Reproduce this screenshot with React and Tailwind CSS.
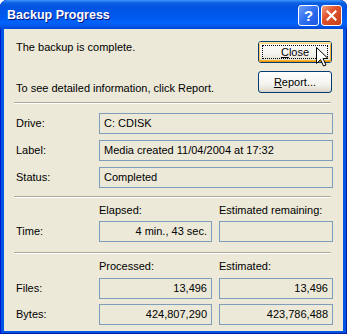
import React from 'react';

const font = { fontFamily: '"Liberation Sans", Arial, sans-serif' };

const Sep = () => (
  <div className="ml-[-2px] mr-[2px] h-[2px] border-t border-[#aca899] border-b border-b-white" />
);

const Field = ({ children, right, className = '' }) => (
  <div
    className={`h-[21px] border border-[#7f9db9] bg-[#ece9d8] flex items-center px-[4px] text-[11px] text-black leading-none ${
      right ? 'justify-end' : ''
    } ${className}`}
  >
    {children}
  </div>
);

const XpButton = ({ children, focused }) => (
  <div className="relative h-[22px] w-[74px] rounded-[3px] border border-[#003c74] bg-[linear-gradient(to_bottom,#ffffff_0%,#f4f3ee_60%,#e6e3d8_85%,#d6d0c5_100%)] flex items-center justify-center text-[11px] text-black">
    {focused && (
      <>
        <div className="absolute inset-0 rounded-[2px] shadow-[inset_0_1px_0_#ffe7a2,inset_0_-1px_0_#e59700,inset_1px_0_0_#fcc95b,inset_-1px_0_0_#f4b23a,inset_0_2px_0_#fcd47c,inset_0_-2px_0_#f8b330]" />
        <div className="absolute inset-[3px] border border-dotted border-black" />
      </>
    )}
    <span className="relative">{children}</span>
  </div>
);

const Cursor = () => (
  <svg
    className="absolute left-[316px] top-[47px]"
    width="14"
    height="21"
    viewBox="0 0 14 21"
  >
    <polygon
      points="0.5,0.5 0.5,16.5 4.5,12.5 7.5,19 10,18 7,11.5 12,11.5"
      fill="white"
      stroke="black"
      strokeWidth="1"
      strokeLinejoin="miter"
    />
  </svg>
);

export default function App() {
  return (
    <div className="w-[347px] h-[334px] bg-white" style={font}>
      <div className="relative w-[347px] h-[334px] rounded-t-[7px] bg-[#0054e3] flex flex-col overflow-hidden shadow-[inset_1px_0_0_#0019cf,inset_-1px_0_0_#001ea0,inset_0_-1px_0_#001ea0]">
        {/* title bar */}
        <div className="h-[29px] shrink-0 flex items-center pl-[7px] pr-[5px] rounded-t-[7px] bg-[linear-gradient(to_bottom,#3d95ff_0px,#0a5fdf_3px,#0054e3_7px,#0058ee_16px,#0062fa_23px,#0058ec_26px,#0046d4_29px)]">
          <span className="text-white font-bold text-[12.5px] leading-none pt-[1px] [text-shadow:1px_1px_0_#0a1883]">
            Backup Progress
          </span>
          <div className="ml-auto flex items-center gap-[2px] pt-[1px]">
            <div className="w-[21px] h-[21px] rounded-[3px] border border-white bg-[linear-gradient(135deg,#6c9cf8_0%,#2f6ff0_50%,#1a56e0_100%)] flex items-center justify-center text-white font-bold text-[15px] leading-none">
              ?
            </div>
            <div className="w-[21px] h-[21px] rounded-[3px] border border-white bg-[linear-gradient(135deg,#f0a07c_0%,#e0522c_40%,#c8401c_100%)] flex items-center justify-center">
              <svg width="11" height="11" viewBox="0 0 11 11">
                <path d="M1.5 1.5 L9.5 9.5 M9.5 1.5 L1.5 9.5" stroke="white" strokeWidth="2.2" strokeLinecap="square" />
              </svg>
            </div>
          </div>
        </div>

        {/* body */}
        <div className="flex-1 mx-[4px] mb-[3px] bg-[#ece9d8] pl-[12px] pr-[10px] flex flex-col text-[11px] text-black">
          <div className="h-[73px] flex justify-between">
            <div className="flex flex-col pt-[12px] leading-[13px]">
              <div>The backup is complete.</div>
              <div className="mt-[28px]">To see detailed information, click Report.</div>
            </div>
            <div className="flex flex-col pt-[12px] gap-[8px] mr-[1px]">
              <XpButton focused>
                <span className="underline">C</span>lose
              </XpButton>
              <XpButton>
                <span className="underline">R</span>eport...
              </XpButton>
            </div>
          </div>

          <Sep />

          <div className="grid grid-cols-[83px_1fr] gap-y-[6px] items-center pt-[9px] pb-[8px]">
            <div>Drive:</div>
            <Field>C: CDISK</Field>
            <div>Label:</div>
            <Field>Media created 11/04/2004 at 17:32</Field>
            <div>Status:</div>
            <Field>Completed</Field>
          </div>

          <Sep />

          <div className="grid grid-cols-[76px_113px_114px] gap-x-[7px] gap-y-[4px] items-center pt-[6px] pb-[10px]">
            <div />
            <div className="leading-[13px]">Elapsed:</div>
            <div className="leading-[13px]">Estimated remaining:</div>
            <div>Time:</div>
            <Field right>4 min., 43 sec.</Field>
            <Field />
          </div>

          <Sep />

          <div className="grid grid-cols-[76px_113px_114px] gap-x-[7px] gap-y-[5px] items-center pt-[6px]">
            <div />
            <div className="leading-[13px]">Processed:</div>
            <div className="leading-[13px]">Estimated:</div>
            <div>Files:</div>
            <Field right>13,496</Field>
            <Field right>13,496</Field>
            <div>Bytes:</div>
            <Field right>424,807,290</Field>
            <Field right>423,786,488</Field>
          </div>
        </div>

        <Cursor />
      </div>
    </div>
  );
}
